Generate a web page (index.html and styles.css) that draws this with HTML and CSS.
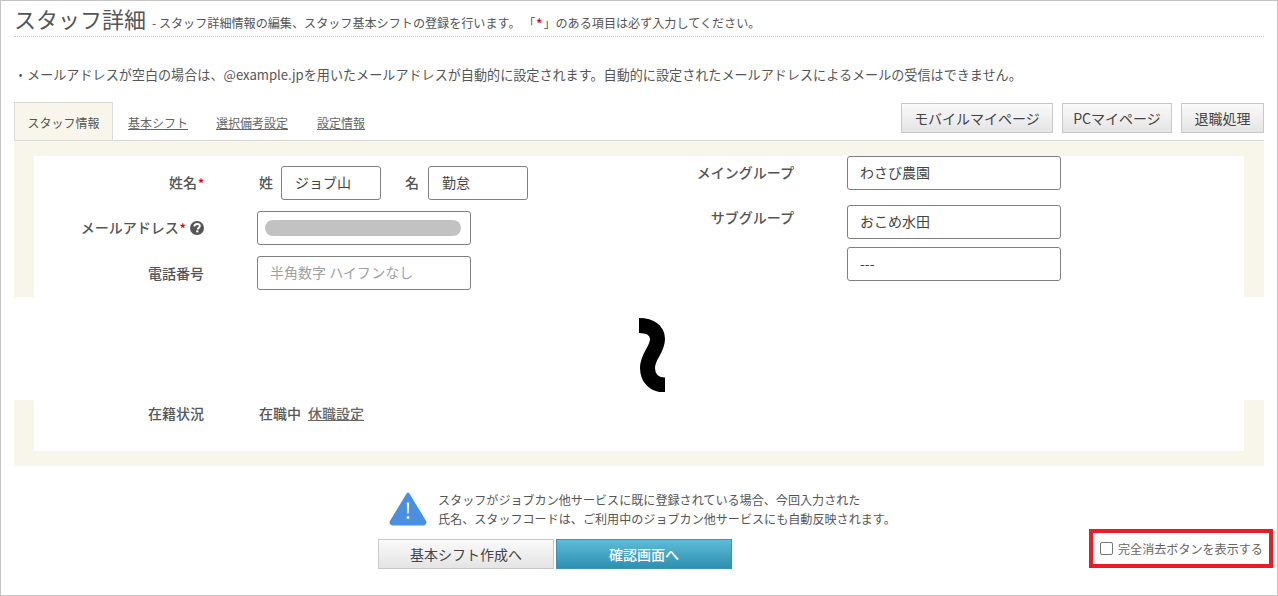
FILE: index.html
```html
<!DOCTYPE html>
<html lang="ja">
<head>
<meta charset="utf-8">
<title>スタッフ詳細</title>
<link rel="stylesheet" href="styles.css">
</head>
<body>
<div class="frame">
  <header class="head">
    <h1 class="title">スタッフ詳細</h1>
    <span class="sub">- スタッフ詳細情報の編集、スタッフ基本シフトの登録を行います。 「<span class="req star">*</span>」のある項目は必ず入力してください。</span>
  </header>
  <p class="note">・メールアドレスが空白の場合は、@example.jpを用いたメールアドレスが自動的に設定されます。自動的に設定されたメールアドレスによるメールの受信はできません。</p>
  <div class="tabbar">
    <nav class="tabs">
      <span class="tab active">スタッフ情報</span>
      <a class="tab" href="#">基本シフト</a>
      <a class="tab" href="#">選択備考設定</a>
      <a class="tab" href="#">設定情報</a>
    </nav>
    <div class="actions">
      <button class="btn mobile">モバイルマイページ</button>
      <button class="btn pc">PCマイページ</button>
      <button class="btn retire">退職処理</button>
    </div>
  </div>
  <section class="panel upper">
    <div class="inner columns">
      <div class="col left">
        <div class="row">
          <span class="label">姓名<span class="req mark">*</span></span>
          <span class="pre">姓</span><div class="input short">ジョブ山</div>
          <span class="pre second">名</span><div class="input short">勤怠</div>
        </div>
        <div class="row">
          <span class="label">メールアドレス<span class="req mark">*</span>
            <svg class="help" viewBox="0 0 14 14" width="14" height="14"><circle cx="7" cy="7" r="7" fill="#555"/><path d="M4.300 5.500C4.400 3.800 5.600 2.900 7.100 2.900c1.600 0 2.700.9 2.700 2.200 0 1.800-2.100 1.800-2.100 3.300" fill="none" stroke="#fff" stroke-width="2"/><rect x="6.200" y="9.400" width="2.200" height="2" fill="#fff"/></svg>
          </span>
          <div class="input wide"><span class="mask"></span></div>
        </div>
        <div class="row">
          <span class="label phone">電話番号</span>
          <div class="input wide placeholder">半角数字 ハイフンなし</div>
        </div>
      </div>
      <div class="col right">
        <div class="row r1">
          <span class="label">メイングループ</span>
          <div class="input wide">わさび農園</div>
        </div>
        <div class="row r2">
          <span class="label up">サブグループ</span>
          <div class="input wide">おこめ水田</div>
        </div>
        <div class="row r3">
          <span class="label"></span>
          <div class="input wide">---</div>
        </div>
      </div>
    </div>
  </section>
  <div class="cut">
    <svg viewBox="0 0 26 74" width="26" height="74"><path d="M0 7.500C12 7.500 18.500 13 18.500 21 18.500 32 8.500 38 8.500 50 8.500 60 15 67 26 67" fill="none" stroke="#000" stroke-width="15"/></svg>
  </div>
  <section class="panel lower">
    <div class="inner status">
      <span class="label">在籍状況</span>
      <span class="state">在職中</span>
      <a class="state-link" href="#">休職設定</a>
    </div>
  </section>
  <div class="notice">
    <svg class="warn" viewBox="0 0 38 34" width="38" height="34"><path d="M19 2 35.800 29.800A1.500 1.500 0 0 1 34.500 32H3.500A1.500 1.500 0 0 1 2.200 29.800Z" fill="#4a90e2" stroke="#4a90e2" stroke-width="3" stroke-linejoin="round"/><path d="M17.800 10.500h2.400l-.5 11h-1.400Z" fill="#fff"/><circle cx="19" cy="25.500" r="1.500" fill="#fff"/></svg>
    <p class="notice-text">スタッフがジョブカン他サービスに既に登録されている場合、今回入力された<br>氏名、スタッフコードは、ご利用中のジョブカン他サービスにも自動反映されます。</p>
  </div>
  <div class="bottom">
    <button class="btn big">基本シフト作成へ</button>
    <button class="btn big primary">確認画面へ</button>
  </div>
  <div class="erase"><label class="erase-label"><span class="check"></span>完全消去ボタンを表示する</label></div>
</div>
</body>
</html>
```
FILE: styles.css
```css
* { box-sizing: border-box; }
html, body { margin: 0; padding: 0; background: #fff; }
body {
  font-family: "Noto Sans CJK JP", "Noto Sans", sans-serif;
  color: #555;
  font-size: 13px;
}
.frame {
  position: relative;
  width: 1278px;
  height: 596px;
  border: 1px solid #c4c4c4;
  padding: 0 13px;
  overflow: hidden;
}
.head {
  display: flex;
  align-items: baseline;
  height: 36px;
  border-bottom: 1px dotted #c8c8c8;
  line-height: 34px;
}
.title {
  margin: 0 6px 0 0;
  font-size: 22px;
  font-weight: 400;
  color: #555;
}
.sub { font-size: 12.100px; color: #555; white-space: nowrap; }
.req { color: #e60012; font-weight: 700; font-size: 12px; }
.star { padding: 0 1px; }
.mark { padding-left: 1px; }
.note {
  margin: 28px 0 0;
  height: 20px;
  line-height: 20px;
  font-size: 13.100px;
  color: #555;
}
.tabbar {
  display: flex;
  justify-content: space-between;
  align-items: flex-end;
  margin-top: 18px;
  height: 38px;
  border-bottom: 1px solid #d9d9d9;
}
.tabs { display: flex; height: 38px; }
.tab {
  display: flex;
  align-items: center;
  padding: 2px 14px 0;
  font-size: 12px;
  color: #666;
  text-decoration: underline;
  white-space: nowrap;
}
.tab.active {
  width: 99px;
  padding: 2px 0 0;
  justify-content: center;
  background: #f8f5eb;
  border: 1px solid #d9d9d9;
  border-bottom: 1px solid #f8f5eb;
  text-decoration: none;
  color: #555;
  height: 38px;
  margin-bottom: -1px;
}
.tab:nth-child(2) { padding-left: 15px; }
.tab:nth-child(4) { padding-left: 15px; }
.actions { display: flex; gap: 9px; align-self: flex-start; }
.btn {
  font-family: inherit;
  font-size: 14px;
  color: #444;
  height: 30px;
  padding: 0;
  border: 1px solid #c8c8c8;
  background: linear-gradient(#fafafa, #e4e4e4);
  border-radius: 0;
}
.mobile { width: 152px; }
.pc { width: 110px; }
.retire { width: 83px; }
.panel { background: #f8f5eb; padding: 0 20px; }
.upper { height: 156px; padding-top: 15px; }
.inner { background: #fff; }
.columns { display: flex; height: 141px; }
.col { display: flex; flex-direction: column; }
.left { width: 606px; padding-top: 10px; gap: 11px; }
.right { width: 604px; }
.row { display: flex; align-items: center; height: 34px; }
.label {
  flex: none;
  font-size: 14px;
  font-weight: 500;
  color: #555;
  text-align: right;
  white-space: nowrap;
  margin-top: -2px;
}
.left .label { width: 170px; margin-right: 53px; }
.right .label { width: 154px; margin-right: 53px; }
.left .phone { margin-top: 0; }
.r2 { margin-top: 15px; }
.r3 { margin-top: 8px; }
.right .up { margin-top: -10px; }
.help { vertical-align: -2px; margin-left: 1px; }
.pre { font-weight: 500; font-size: 14px; width: 22px; margin: -2px 0 0 2px; }
.pre.second { width: 23px; margin-left: 24px; }
.input {
  display: flex;
  align-items: center;
  flex: none;
  height: 34px;
  border: 1px solid #808080;
  border-radius: 3px;
  background: #fff;
  padding: 0 12px 2px;
  font-size: 14px;
  color: #444;
}
.short { width: 100px; padding-left: 13px; }
.wide { width: 214px; }
.placeholder { color: #a0a0a0; }
.mask {
  display: block;
  flex: none;
  width: 196px;
  height: 16px;
  margin: 2px 0 0 -5px;
  border-radius: 8px;
  background: #c2c2c2;
}
.cut {
  height: 103px;
  display: flex;
  justify-content: center;
  padding: 21px 0 0 26px;
}
.cut svg { display: block; }
.lower { height: 66px; padding-bottom: 15px; }
.status { display: flex; align-items: flex-start; height: 51px; padding-top: 4px; line-height: 20px; }
.status .label { width: 170px; margin-right: 55px; margin-top: -1px; }
.state { font-weight: 500; font-size: 14px; margin: -1px 7px 0 0; }
.state-link { font-weight: 500; font-size: 14px; color: #666; margin-top: -1px; }
.notice {
  display: flex;
  align-items: center;
  margin: 24px 0 0 375px;
  height: 38px;
}
.warn { flex: none; margin: 0 11px 0 0; display: block; }
.notice-text { margin: 0; font-size: 12.080px; line-height: 19px; color: #555; white-space: nowrap; }
.bottom { display: flex; gap: 2px; margin: 11px 0 0 364px; }
.big { width: 176px; height: 30px; font-size: 14px; }
.primary {
  background: linear-gradient(#5cbcd9, #2f8fb0);
  border-color: #3a94b4;
  color: #fff;
  font-weight: 500;
}
.erase {
  position: absolute;
  right: 4px;
  bottom: 27px;
  width: 184px;
  height: 39px;
  border: 4px solid #ec1c24;
  display: flex;
  align-items: center;
  padding-left: 7px;
}
.erase-label { display: flex; align-items: center; font-size: 12.080px; color: #666; white-space: nowrap; }
.check {
  width: 13px;
  height: 13px;
  margin-right: 5px;
  border: 1px solid #767676;
  border-radius: 2px;
  background: #fff;
}
```
